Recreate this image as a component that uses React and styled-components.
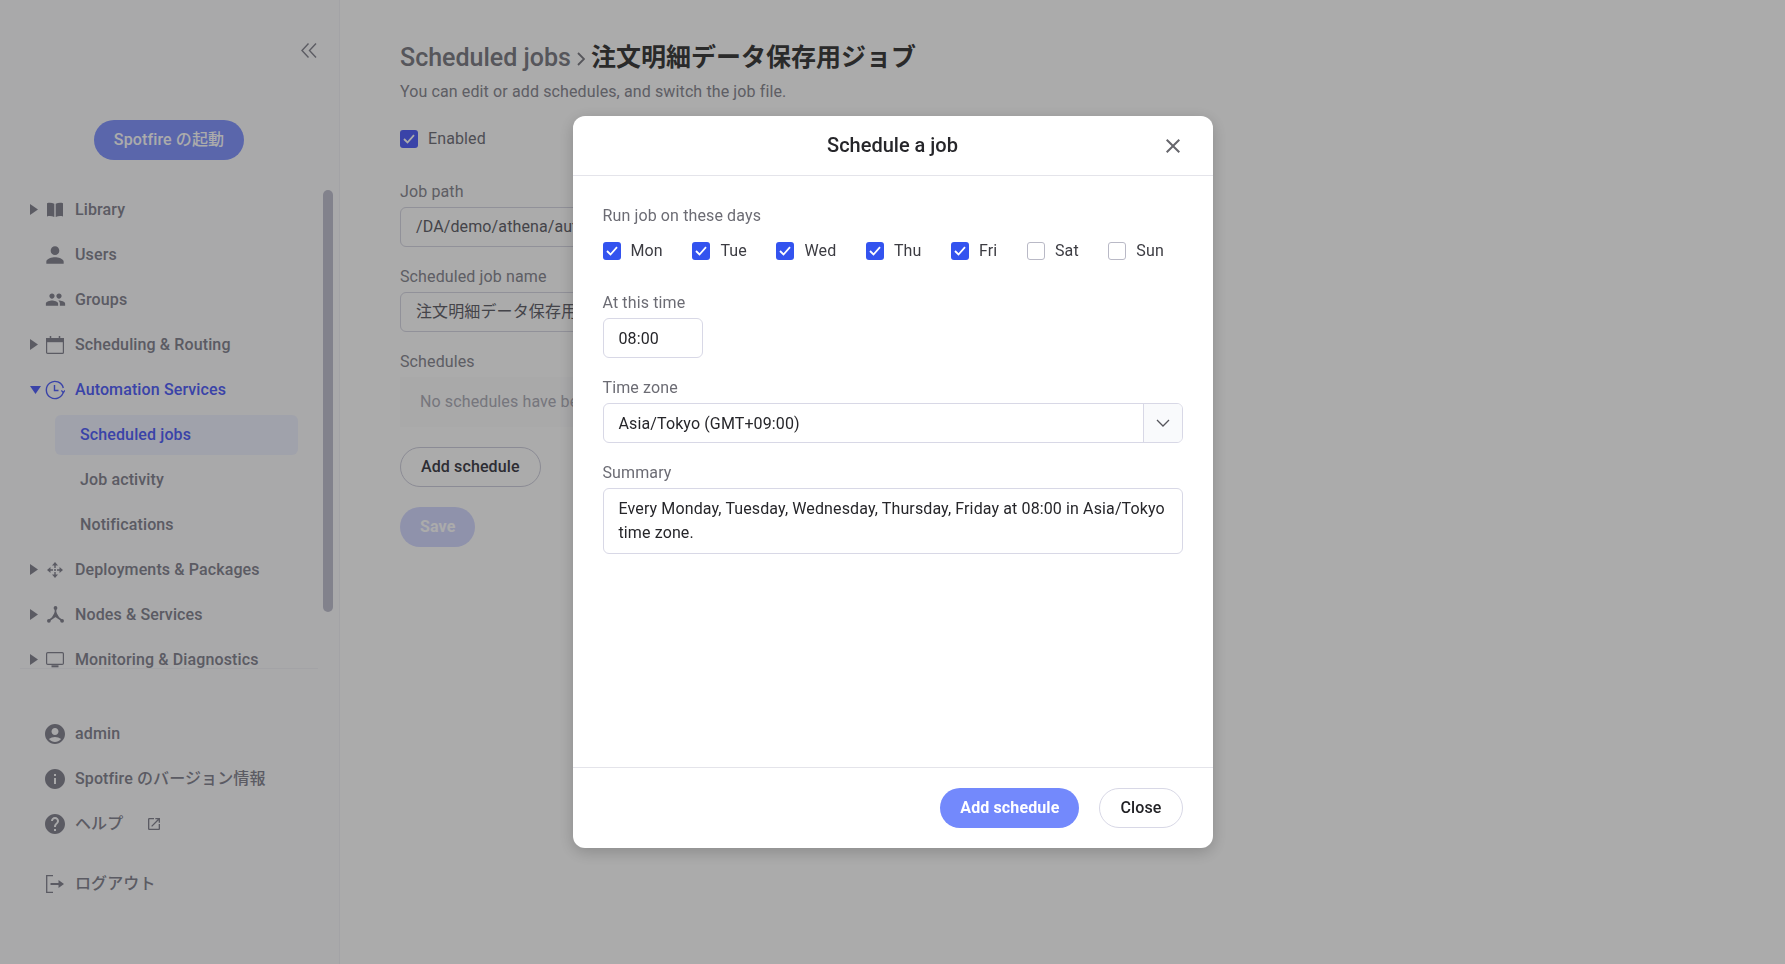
import React from 'react'
import styled, {createGlobalStyle} from 'styled-components'
import {MdPerson, MdPeople, MdAccountCircle, MdInfo, MdHelp, MdOpenInNew, MdClose} from 'react-icons/md'

const GlobalStyle = createGlobalStyle`
    html, body {
        margin: 0;
        padding: 0;
        height: 100%;
        background: #fff;
        font-family: Roboto, "Noto Sans CJK JP", sans-serif;
        font-size: 16px;
        line-height: 24px;
        letter-spacing: 0.12px;
        overflow: hidden;
    }
    * { box-sizing: border-box; }
`

const Page = styled.div`
    display: flex;
    width: 1785px;
    height: 964px;
    overflow: hidden;
`

const Sidebar = styled.aside`
    flex: 0 0 340px;
    height: 100%;
    display: flex;
    flex-direction: column;
    background: #fcfcfe;
    border-right: 1px solid #f4f4f8;
    color: #888894;
`

const CollapseBtn = styled.div`
    display: flex;
    justify-content: flex-end;
    padding: 43px 22px 0 0;
    height: 120px;
    color: #8a8a94;
`

const LaunchRow = styled.div`
    display: flex;
    padding-left: 94px;
    height: 67px;
`

const LaunchBtn = styled.div`
    width: 150px;
    height: 40px;
    border-radius: 20px;
    background: #8699ff;
    color: #fff;
    font-weight: 500;
    display: flex;
    align-items: center;
    justify-content: center;
`

const NavArea = styled.nav`
    position: relative;
    display: flex;
    flex-direction: column;
    height: 481px;
    overflow: hidden;
`

const ScrollThumb = styled.div`
    position: absolute;
    left: 323px;
    top: 3px;
    width: 10px;
    height: 422px;
    border-radius: 5px;
    background: #c2c2d1;
`

const NavRow = styled.div`
    flex: 0 0 45px;
    display: flex;
    align-items: center;
    height: 45px;
    padding-left: 30px;
    font-weight: 500;
    color: ${p => (p.$active ? '#5765fb' : '#888894')};
`

const CaretSlot = styled.div`
    flex: 0 0 16px;
    display: flex;
    align-items: center;
`

const IconSlot = styled.div`
    flex: 0 0 20px;
    min-width: 0;
    margin-left: -1px;
    margin-right: 10px;
    height: 20px;
    display: flex;
    align-items: center;
    justify-content: center;
    svg { flex-shrink: 0; }
`

const SubRow = styled.div`
    flex: 0 0 40px;
    display: flex;
    align-items: center;
    margin: 2.5px 0 2.5px 55px;
    width: 243px;
    padding-left: 25px;
    border-radius: 6px;
    font-weight: 500;
    color: ${p => (p.$active ? '#5765fb' : '#888894')};
    background: ${p => (p.$active ? '#eff2ff' : 'transparent')};
`

const Divider = styled.div`
    height: 1px;
    margin: 0 21px 0 20px;
    background: #f4f4f8;
`

const FooterNav = styled.div`
    display: flex;
    flex-direction: column;
    padding-top: 42px;
`

const FootRow = styled(NavRow)`
    padding-left: 45px;
    margin-top: ${p => p.$gap || 0}px;
`

const FootIcon = styled.div`
    flex: 0 0 20px;
    min-width: 0;
    margin-right: 10px;
    height: 20px;
    display: flex;
    align-items: center;
    justify-content: center;
    svg { flex-shrink: 0; }
`

const ExternalMark = styled.span`
    display: inline-flex;
    margin-left: 23px;
`

const Main = styled.main`
    flex: 1;
    padding: 41px 0 0 60px;
`

const Title = styled.h1`
    display: flex;
    align-items: baseline;
    margin: 0;
    height: 34px;
    font-size: 25px;
    line-height: 34px;
    letter-spacing: 0;
    font-weight: 500;
    color: #808088;
`

const TitleSep = styled.span`
    display: inline-flex;
    align-self: center;
    margin: 2px 6px 0 6px;
`

const TitleJob = styled.span`
    font-weight: 700;
    color: #3f3f3f;
`

const Subtitle = styled.p`
    margin: 5px 0 0;
    color: #8c8c95;
`

const EnabledRow = styled.label`
    display: flex;
    align-items: center;
    gap: 10px;
    margin-top: 26px;
    height: 18px;
    color: #75757e;
`

const FormLabel = styled.div`
    margin-top: ${p => p.$top || 18}px;
    margin-bottom: 3px;
    color: #8c8c95;
`

const PageInput = styled.div`
    width: 640px;
    height: 40px;
    padding: 0 15px;
    border: 1px solid #d8d8e4;
    border-radius: 6px;
    display: flex;
    align-items: center;
    color: #66666e;
    white-space: nowrap;
    overflow: hidden;
`

const EmptyBox = styled.div`
    width: 640px;
    height: 50px;
    padding-left: 20px;
    display: flex;
    align-items: center;
    background: #fcfcfd;
    color: #b0b0ba;
`

const PillBtn = styled.div`
    display: inline-flex;
    align-items: center;
    justify-content: center;
    height: 40px;
    padding: 0 20px;
    border-radius: 20px;
    font-weight: 500;
    white-space: nowrap;
`

const OutlineBtn = styled(PillBtn)`
    background: transparent;
    border: 1px solid ${p => (p.$light ? '#d8d8e6' : '#d0d0de')};
    color: ${p => (p.$light ? '#222226' : '#44444c')};
`

const SaveBtn = styled(PillBtn)`
    background: #d6daff;
    color: #fff;
    font-weight: 700;
`

const ButtonStack = styled.div`
    display: flex;
    flex-direction: column;
    align-items: flex-start;
    gap: 20px;
    margin-top: 20px;
`

const Overlay = styled.div`
    position: fixed;
    inset: 0;
    background: rgba(0, 0, 0, 0.33);
    display: flex;
    justify-content: center;
    padding-top: 116px;
`

const Modal = styled.div`
    width: 640px;
    height: 732px;
    display: flex;
    flex-direction: column;
    background: #fff;
    border-radius: 12px;
    box-shadow: 0 4px 16px rgba(0, 0, 0, 0.2);
`

const ModalHead = styled.div`
    position: relative;
    flex: 0 0 60px;
    display: flex;
    align-items: center;
    justify-content: center;
    padding-bottom: 2px;
    border-bottom: 1px solid #e4e4ea;
    font-size: 20px;
    font-weight: 500;
    letter-spacing: 0;
    color: #26262a;
`

const CloseIcon = styled.div`
    position: absolute;
    right: 28px;
    top: 18px;
    display: flex;
    color: #66666c;
`

const ModalBody = styled.div`
    flex: 1;
    padding: 28px 30px 0;
`

const ModalLabel = styled.div`
    margin-top: ${p => p.$top || 0}px;
    margin-bottom: ${p => p.$bottom ?? 3}px;
    color: #6c6c74;
`

const DaysRow = styled.div`
    display: flex;
    align-items: center;
    gap: 29.6px;
    height: 24px;
    margin-top: 11px;
`

const Day = styled.label`
    display: flex;
    align-items: center;
    gap: 10px;
    color: #3c3c42;
`

const Box = styled.span`
    width: 18px;
    height: 18px;
    border-radius: 3px;
    display: inline-flex;
    align-items: center;
    justify-content: center;
    background: ${p => (p.$on ? p.$color || '#3353ef' : '#fff')};
    border: ${p => (p.$on ? '0' : '1.5px solid #b9b9c6')};
`

const TimeInput = styled.div`
    width: 100px;
    height: 40px;
    padding: 1px 0 0 15px;
    display: flex;
    align-items: center;
    border: 1px solid #d8d8e6;
    border-radius: 6px;
    color: #26262a;
`

const Select = styled.div`
    height: 40px;
    display: flex;
    border: 1px solid #d8d8e6;
    border-radius: 6px;
    color: #26262a;
    overflow: hidden;
`

const SelectValue = styled.div`
    flex: 1;
    padding: 1px 0 0 15px;
    display: flex;
    align-items: center;
`

const SelectArrow = styled.div`
    flex: 0 0 39px;
    display: flex;
    align-items: center;
    justify-content: center;
    background: #f9fafc;
    border-left: 1px solid #d8d8e6;
    color: #55555c;
`

const SummaryBox = styled.div`
    height: 66px;
    padding: 8px 15px;
    border: 1px solid #d8d8e6;
    border-radius: 6px;
    color: #26262a;
`

const ModalFoot = styled.div`
    flex: 0 0 81px;
    display: flex;
    justify-content: flex-end;
    gap: 20px;
    padding: 20px 30px;
    border-top: 1px solid #e4e4ea;
`

const PrimaryBtn = styled(PillBtn)`
    background: #7389fc;
    color: #fff;
    font-weight: 700;
`

const Caret = ({open}) => (
    <svg width={open ? 11 : 8} height={open ? 8 : 11} viewBox={open ? '0 0 11 8' : '0 0 8 11'} fill="currentColor">
        {open ? <path d="M0 0h11L5.5 8z"/> : <path d="M0 0l8 5.5L0 11z"/>}
    </svg>
)

const BookIcon = () => (
    <svg width="18" height="15" viewBox="0 0 18 15" fill="currentColor">
        <path d="M1 1.2C3.5.4 6 .7 8.300 1.800V15c-2.300-1-4.800-1.200-7.300-.6z"/>
        <path d="M17 1.200C14.500.4 12 .7 9.700 1.800V15c2.300-1 4.800-1.200 7.300-.6z"/>
    </svg>
)

const CalendarIcon = () => (
    <svg width="18" height="18" viewBox="0 0 18 18" fill="none" stroke="currentColor">
        <rect x=".6" y="2.600" width="16.800" height="14.800" rx="1" strokeWidth="1.200"/>
        <rect x=".6" y="2.600" width="16.800" height="3" fill="currentColor" strokeWidth="1.200"/>
        <path d="M4.500 0v3M13.500 0v3" strokeWidth="1.500"/>
    </svg>
)

const ClockIcon = () => (
    <svg width="20" height="20" viewBox="0 0 20 20" fill="none" stroke="currentColor" strokeWidth="1.400">
        <path d="M18.400 11.500A8.600 8.600 0 1 1 18.300 8"/>
        <path d="M9.500 5v5.500h4"/>
        <path d="M16.300 10.500l2.200 2 1.500-2.200" strokeWidth="1.200"/>
    </svg>
)

const MoveIcon = () => (
    <svg width="16" height="16" viewBox="0 0 16 16" fill="currentColor">
        <path d="M8 0l3 3.500H5zM8 16l-3-3.500h6zM0 8l3.500-3v6zM16 8l-3.500 3V5z"/>
        <path d="M7.300 3h1.400v3H7.300zM7.300 10h1.400v3H7.300zM3 7.300h3v1.400H3zM10 7.300h3v1.400h-3z"/>
        <circle cx="8" cy="8" r="1"/>
    </svg>
)

const NodesIcon = () => (
    <svg width="17" height="17" viewBox="0 0 17 17" fill="currentColor" stroke="currentColor">
        <circle cx="8.500" cy="1.900" r="1.900" stroke="none"/>
        <circle cx="1.900" cy="14.800" r="1.900" stroke="none"/>
        <circle cx="15.100" cy="14.800" r="1.900" stroke="none"/>
        <path d="M8.500 2v8M8.500 10l-6.500 4.500M8.500 10l6.500 4.500" strokeWidth="1.700"/>
        <path d="M8.500 5l4 7-4-1.700-4 1.700z" stroke="none"/>
    </svg>
)

const MonitorIcon = () => (
    <svg width="18" height="16" viewBox="0 0 18 16" fill="none" stroke="currentColor">
        <rect x=".6" y=".6" width="16.800" height="11.800" rx="1.200" strokeWidth="1.200"/>
        <path d="M5.500 14.300h7" strokeWidth="2"/>
    </svg>
)

const LogoutIcon = () => (
    <svg width="18" height="18" viewBox="0 0 18 18" fill="none" stroke="currentColor" strokeWidth="1.300">
        <path d="M7 .7H.7v16.600H7"/>
        <path d="M4.500 9H13" strokeWidth="2"/>
        <path d="M12.500 5L18 9l-5.500 4z" fill="currentColor" stroke="none"/>
    </svg>
)

const ChevronsIcon = () => (
    <svg width="16" height="15" viewBox="0 0 16 15" fill="none" stroke="currentColor" strokeWidth="1.400">
        <path d="M7.500.5L1 7.500l6.500 7"/>
        <path d="M15 .5L8.500 7.500l6.500 7"/>
    </svg>
)

const TitleChevron = () => (
    <svg width="8" height="14" viewBox="0 0 8 14" fill="none" stroke="#808088" strokeWidth="1.800">
        <path d="M1 1l6 6-6 6"/>
    </svg>
)

const SelectChevron = () => (
    <svg width="14" height="8" viewBox="0 0 14 8" fill="none" stroke="currentColor" strokeWidth="1.300">
        <path d="M1 1l6 6 6-6"/>
    </svg>
)

const Check = ({color}) => (
    <svg width="12" height="10" viewBox="0 0 12 10" fill="none" stroke={color || '#fff'} strokeWidth="1.800">
        <path d="M1 5l3.500 3.500L11 1.200"/>
    </svg>
)

const days = [
    {name: 'Mon', on: true},
    {name: 'Tue', on: true},
    {name: 'Wed', on: true},
    {name: 'Thu', on: true},
    {name: 'Fri', on: true},
    {name: 'Sat', on: false},
    {name: 'Sun', on: false},
]

export default function App() {
    return (
        <>
            <GlobalStyle/>
            <Page>
                <Sidebar>
                    <CollapseBtn><ChevronsIcon/></CollapseBtn>
                    <LaunchRow><LaunchBtn>Spotfire の起動</LaunchBtn></LaunchRow>
                    <NavArea>
                        <ScrollThumb/>
                        <NavRow>
                            <CaretSlot><Caret/></CaretSlot>
                            <IconSlot><BookIcon/></IconSlot>
                            Library
                        </NavRow>
                        <NavRow>
                            <CaretSlot/>
                            <IconSlot><MdPerson size={26}/></IconSlot>
                            Users
                        </NavRow>
                        <NavRow>
                            <CaretSlot/>
                            <IconSlot><MdPeople size={21}/></IconSlot>
                            Groups
                        </NavRow>
                        <NavRow>
                            <CaretSlot><Caret/></CaretSlot>
                            <IconSlot><CalendarIcon/></IconSlot>
                            Scheduling &amp; Routing
                        </NavRow>
                        <NavRow $active>
                            <CaretSlot><Caret open/></CaretSlot>
                            <IconSlot><ClockIcon/></IconSlot>
                            Automation Services
                        </NavRow>
                        <SubRow $active>Scheduled jobs</SubRow>
                        <SubRow>Job activity</SubRow>
                        <SubRow>Notifications</SubRow>
                        <NavRow>
                            <CaretSlot><Caret/></CaretSlot>
                            <IconSlot><MoveIcon/></IconSlot>
                            Deployments &amp; Packages
                        </NavRow>
                        <NavRow>
                            <CaretSlot><Caret/></CaretSlot>
                            <IconSlot><NodesIcon/></IconSlot>
                            Nodes &amp; Services
                        </NavRow>
                        <NavRow>
                            <CaretSlot><Caret/></CaretSlot>
                            <IconSlot><MonitorIcon/></IconSlot>
                            Monitoring &amp; Diagnostics
                        </NavRow>
                    </NavArea>
                    <Divider/>
                    <FooterNav>
                        <FootRow>
                            <FootIcon><MdAccountCircle size={24}/></FootIcon>
                            admin
                        </FootRow>
                        <FootRow>
                            <FootIcon><MdInfo size={24}/></FootIcon>
                            Spotfire のバージョン情報
                        </FootRow>
                        <FootRow>
                            <FootIcon><MdHelp size={24}/></FootIcon>
                            ヘルプ
                            <ExternalMark><MdOpenInNew size={16}/></ExternalMark>
                        </FootRow>
                        <FootRow $gap={15}>
                            <FootIcon><LogoutIcon/></FootIcon>
                            ログアウト
                        </FootRow>
                    </FooterNav>
                </Sidebar>
                <Main>
                    <Title>
                        Scheduled jobs
                        <TitleSep><TitleChevron/></TitleSep>
                        <TitleJob>注文明細データ保存用ジョブ</TitleJob>
                    </Title>
                    <Subtitle>You can edit or add schedules, and switch the job file.</Subtitle>
                    <EnabledRow>
                        <Box $on $color="#5765fb"><Check/></Box>
                        Enabled
                    </EnabledRow>
                    <FormLabel $top={32}>Job path</FormLabel>
                    <PageInput>/DA/demo/athena/auto</PageInput>
                    <FormLabel>Scheduled job name</FormLabel>
                    <PageInput>注文明細データ保存用ジョブ</PageInput>
                    <FormLabel>Schedules</FormLabel>
                    <EmptyBox>No schedules have been added.</EmptyBox>
                    <ButtonStack>
                        <OutlineBtn>Add schedule</OutlineBtn>
                        <SaveBtn>Save</SaveBtn>
                    </ButtonStack>
                </Main>
            </Page>
            <Overlay>
                <Modal>
                    <ModalHead>
                        Schedule a job
                        <CloseIcon><MdClose size={24}/></CloseIcon>
                    </ModalHead>
                    <ModalBody>
                        <ModalLabel $bottom={0}>Run job on these days</ModalLabel>
                        <DaysRow>
                            {days.map(d => (
                                <Day key={d.name}>
                                    <Box $on={d.on}>{d.on && <Check/>}</Box>
                                    {d.name}
                                </Day>
                            ))}
                        </DaysRow>
                        <ModalLabel $top={28}>At this time</ModalLabel>
                        <TimeInput>08:00</TimeInput>
                        <ModalLabel $top={18}>Time zone</ModalLabel>
                        <Select>
                            <SelectValue>Asia/Tokyo (GMT+09:00)</SelectValue>
                            <SelectArrow><SelectChevron/></SelectArrow>
                        </Select>
                        <ModalLabel $top={18} $bottom={3}>Summary</ModalLabel>
                        <SummaryBox>Every Monday, Tuesday, Wednesday, Thursday, Friday at 08:00 in Asia/Tokyo time zone.</SummaryBox>
                    </ModalBody>
                    <ModalFoot>
                        <PrimaryBtn>Add schedule</PrimaryBtn>
                        <OutlineBtn $light>Close</OutlineBtn>
                    </ModalFoot>
                </Modal>
            </Overlay>
        </>
    )
}
